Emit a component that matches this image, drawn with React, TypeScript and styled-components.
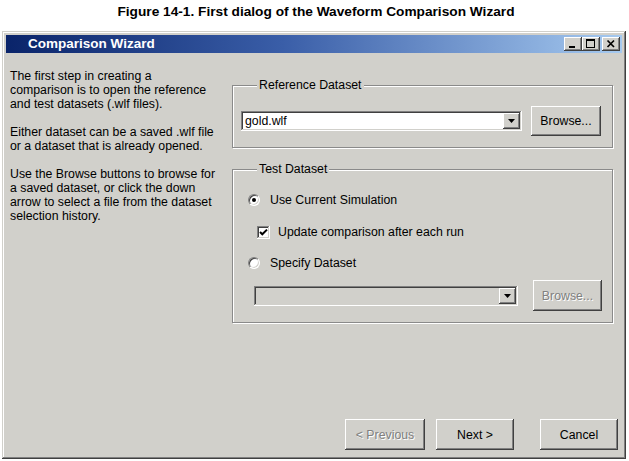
import React from "react";
import styled, { createGlobalStyle } from "styled-components";

const Global = createGlobalStyle`
  html, body { margin: 0; padding: 0; background: #fff; }
  body { font-family: "Liberation Sans", Arial, sans-serif; color: #000; }
`;

const FACE = "#d1d0cb";
const UI_FONT = `"Liberation Sans", Arial, sans-serif`;

const Page = styled.div`
  width: 629px;
  height: 461px;
  background: #fff;
  overflow: hidden;
`;

const Caption = styled.div`
  height: 31px;
  box-sizing: border-box;
  padding: 4px 0 0 3px;
  text-align: center;
  font: bold 13.7px/16px ${UI_FONT};
  color: #000;
  white-space: nowrap;
`;

const Window = styled.div`
  margin-left: 2px;
  width: 624px;
  height: 428px;
  box-sizing: border-box;
  padding: 4px;
  background: ${FACE};
  box-shadow: inset -1px -1px #404040, inset 1px 1px ${FACE},
    inset -2px -2px #808080, inset 2px 2px #fff;
  display: flex;
  flex-direction: column;
`;

const TitleBar = styled.div`
  height: 18px;
  flex: none;
  display: flex;
  align-items: center;
  padding: 0 2px 0 22px;
  background: linear-gradient(90deg, #0a246a 0%, #3a5ea8 45%, #a6caf0 100%);
`;

const TitleText = styled.div`
  color: #fff;
  font: bold 13.5px/18px ${UI_FONT};
  white-space: nowrap;
`;

const TitleButtons = styled.div`
  margin-left: auto;
  display: flex;
`;

const TitleButton = styled.div<{ $gap?: number }>`
  width: 18px;
  height: 14px;
  margin-left: ${(p) => p.$gap ?? 0}px;
  background: ${FACE};
  box-shadow: inset -1px -1px #404040, inset 1px 1px #fff,
    inset -2px -2px #808080, inset 2px 2px ${FACE};
  display: flex;
  svg { display: block; }
`;

const Body = styled.div`
  flex: 1;
  display: flex;
  flex-direction: column;
  padding: 0 4px 5px 4px;
  font: 12.3px/14px ${UI_FONT};
`;

const Main = styled.div`
  display: flex;
`;

const Description = styled.div`
  width: 222px;
  flex: none;
  padding-top: 16px;
  white-space: nowrap;
`;

const Para = styled.p`
  margin: 0 0 14px;
`;

const Groups = styled.div`
  width: 381px;
  flex: none;
  padding-top: 32px;
  display: flex;
  flex-direction: column;
`;

const Group = styled.div<{ $top?: number; $pt: number; $pb: number; $pl: number }>`
  position: relative;
  margin-top: ${(p) => p.$top ?? 0}px;
  padding: ${(p) => p.$pt}px 8px ${(p) => p.$pb}px ${(p) => p.$pl}px;
  border: 1px solid #8a8a8a;
  box-shadow: 1px 1px 0 #fff, inset 1px 1px 0 #fff;
  display: flex;
  flex-direction: column;
`;

const GroupLabel = styled.div`
  position: absolute;
  top: -8px;
  left: 24px;
  padding: 0 2px;
  background: ${FACE};
  line-height: 14px;
  white-space: nowrap;
`;

const Row = styled.div<{ $gap?: number; $indent?: number; $mt?: number }>`
  display: flex;
  align-items: center;
  gap: ${(p) => p.$gap ?? 0}px;
  margin-left: ${(p) => p.$indent ?? 0}px;
  margin-top: ${(p) => p.$mt ?? 0}px;
  min-height: 16px;
  white-space: nowrap;
`;

const Combo = styled.div<{ $w: number; $disabled?: boolean }>`
  width: ${(p) => p.$w}px;
  height: 20px;
  box-sizing: border-box;
  padding: 2px;
  display: flex;
  background: ${(p) => (p.$disabled ? FACE : "#fff")};
  box-shadow: inset -1px -1px #fff, inset 1px 1px #808080,
    inset -2px -2px ${FACE}, inset 2px 2px #404040;
`;

const ComboText = styled.div`
  flex: 1;
  padding-left: 2px;
  line-height: 16px;
`;

const ArrowButton = styled.div`
  width: 17px;
  height: 16px;
  flex: none;
  background: ${FACE};
  box-shadow: inset -1px -1px #404040, inset 1px 1px #fff,
    inset -2px -2px #808080, inset 2px 2px ${FACE};
  display: flex;
  align-items: center;
  justify-content: center;
  svg { display: block; }
`;

const Button = styled.div<{ $w: number; $h: number; $disabled?: boolean; $ml?: number }>`
  width: ${(p) => p.$w}px;
  height: ${(p) => p.$h}px;
  margin-left: ${(p) => p.$ml ?? 0}px;
  flex: none;
  box-sizing: border-box;
  background: ${FACE};
  box-shadow: inset -1px -1px #404040, inset 1px 1px #fff,
    inset -2px -2px #808080, inset 2px 2px ${FACE};
  display: flex;
  align-items: center;
  justify-content: center;
  color: ${(p) => (p.$disabled ? "#808080" : "#000")};
  text-shadow: ${(p) => (p.$disabled ? "1px 1px 0 #fff" : "none")};
  white-space: nowrap;
`;

const Radio = styled.div<{ $checked?: boolean }>`
  width: 12px;
  height: 12px;
  flex: none;
  box-sizing: border-box;
  border-radius: 50%;
  background: #fff;
  border: 1px solid;
  border-color: #808080 #fff #fff #808080;
  box-shadow: inset 1px 1px 0 #404040, inset -1px -1px 0 ${FACE};
  display: flex;
  align-items: center;
  justify-content: center;
  &::after {
    content: "";
    width: 4px;
    height: 4px;
    border-radius: 50%;
    background: ${(p) => (p.$checked ? "#000" : "transparent")};
  }
`;

const Checkbox = styled.div`
  width: 13px;
  height: 13px;
  flex: none;
  background: #fff;
  box-shadow: inset -1px -1px #fff, inset 1px 1px #808080,
    inset -2px -2px ${FACE}, inset 2px 2px #404040;
  svg { display: block; }
`;

const Footer = styled.div`
  margin-top: auto;
  display: flex;
  justify-content: flex-end;
`;

const Arrow = () => (
  <svg width="7" height="4" viewBox="0 0 7 4">
    <path d="M0 0h7L3.5 4z" fill="#000" />
  </svg>
);

export default function App() {
  return (
    <Page>
      <Global />
      <Caption>Figure 14-1. First dialog of the Waveform Comparison Wizard</Caption>
      <Window>
        <TitleBar>
          <TitleText>Comparison Wizard</TitleText>
          <TitleButtons>
            <TitleButton>
              <svg width="18" height="14" viewBox="0 0 18 14">
                <rect x="5" y="9" width="6" height="2" fill="#000" />
              </svg>
            </TitleButton>
            <TitleButton>
              <svg width="18" height="14" viewBox="0 0 18 14">
                <path d="M4 2h9v9H4z M5 4v6h7V4z" fill="#000" fillRule="evenodd" />
              </svg>
            </TitleButton>
            <TitleButton $gap={2}>
              <svg width="18" height="14" viewBox="0 0 18 14">
                <path d="M5.5 3.5L12 10M12 3.5L5.5 10" stroke="#000" strokeWidth="1.7" />
              </svg>
            </TitleButton>
          </TitleButtons>
        </TitleBar>
        <Body>
          <Main>
            <Description>
              <Para>
                The first step in creating a<br />
                comparison is to open the reference<br />
                and test datasets (.wlf files).
              </Para>
              <Para>
                Either dataset can be a saved .wlf file<br />
                or a dataset that is already opened.
              </Para>
              <Para>
                Use the Browse buttons to browse for<br />
                a saved dataset, or click the down<br />
                arrow to select a file from the dataset<br />
                selection history.
              </Para>
            </Description>
            <Groups>
              <Group $pt={20} $pb={11} $pl={8}>
                <GroupLabel>Reference Dataset</GroupLabel>
                <Row $gap={9}>
                  <Combo $w={281}>
                    <ComboText>gold.wlf</ComboText>
                    <ArrowButton>
                      <Arrow />
                    </ArrowButton>
                  </Combo>
                  <Button $w={70} $h={30}>Browse...</Button>
                </Row>
              </Group>
              <Group $top={21} $pt={22} $pb={11} $pl={15}>
                <GroupLabel>Test Dataset</GroupLabel>
                <Row $gap={10}>
                  <Radio $checked />
                  <span>Use Current Simulation</span>
                </Row>
                <Row $gap={8} $indent={9} $mt={16}>
                  <Checkbox>
                    <svg width="13" height="13" viewBox="0 0 13 13">
                      <path d="M3 6l2.3 2.3L10 3.6" fill="none" stroke="#000" strokeWidth="2" />
                    </svg>
                  </Checkbox>
                  <span>Update comparison after each run</span>
                </Row>
                <Row $gap={10} $mt={15}>
                  <Radio />
                  <span>Specify Dataset</span>
                </Row>
                <Row $gap={15} $indent={6} $mt={9}>
                  <Combo $w={264} $disabled>
                    <ComboText />
                    <ArrowButton>
                      <Arrow />
                    </ArrowButton>
                  </Combo>
                  <Button $w={69} $h={31} $disabled>
                    Browse...
                  </Button>
                </Row>
              </Group>
            </Groups>
          </Main>
          <Footer>
            <Button $w={80} $h={31} $disabled>
              &lt; Previous
            </Button>
            <Button $w={78} $h={31} $ml={11}>
              Next &gt;
            </Button>
            <Button $w={78} $h={31} $ml={26}>
              Cancel
            </Button>
          </Footer>
        </Body>
      </Window>
    </Page>
  );
}
